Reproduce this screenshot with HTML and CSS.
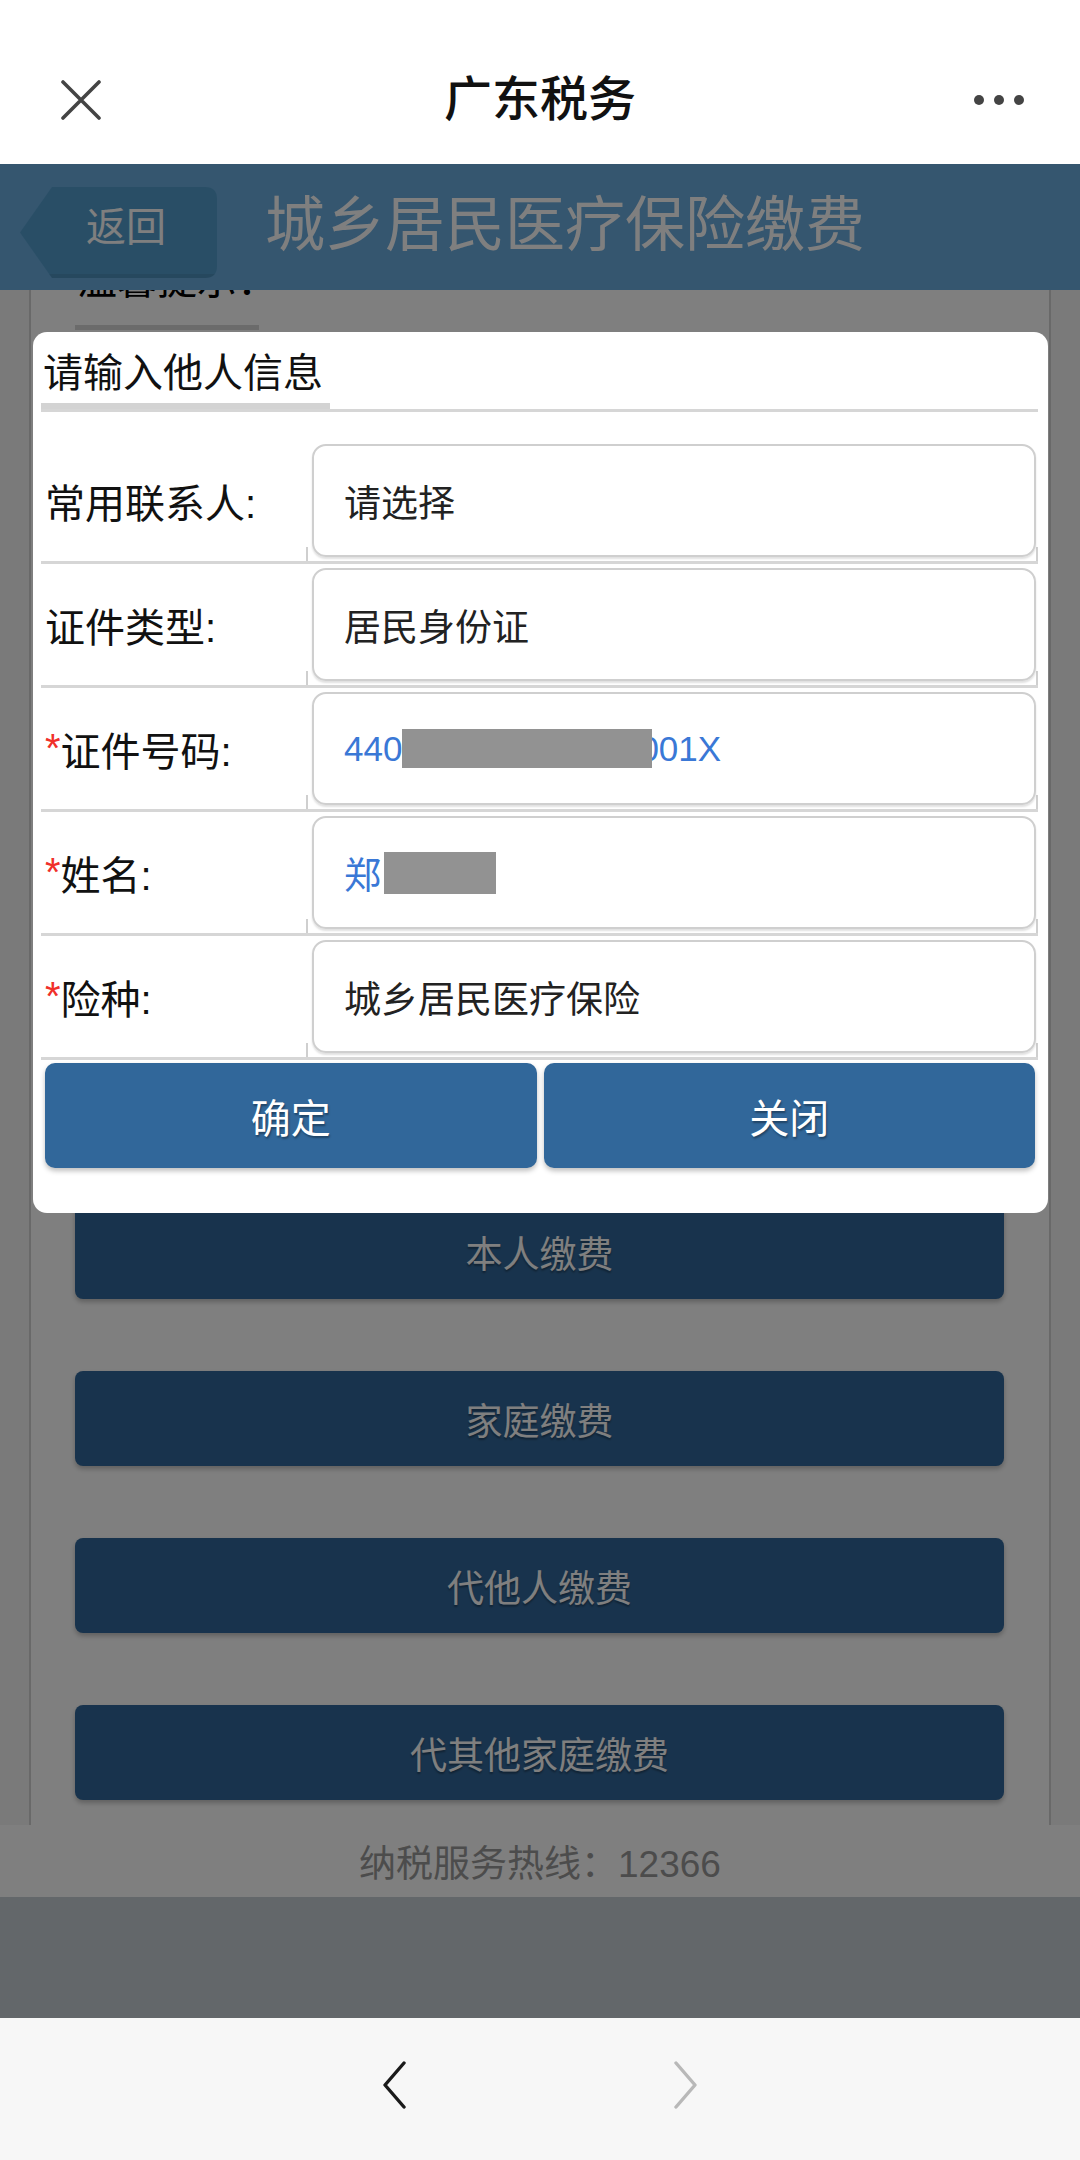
FILE: index.html
```html
<!DOCTYPE html>
<html lang="zh-CN">
<head>
<meta charset="utf-8">
<title>广东税务</title>
<link rel="stylesheet" href="styles.css">
</head>
<body>
<div class="screen">
  <div class="wx-nav">
    <div class="wx-left">
      <svg class="wx-close" width="40" height="40" viewBox="0 0 40 40"><path d="M2 2 L38 38 M38 2 L2 38" stroke="#444" stroke-width="3.6" stroke-linecap="round" fill="none"/></svg>
    </div>
    <div class="wx-title">广东税务</div>
    <div class="wx-right">
      <svg width="50" height="10" viewBox="0 0 50 10"><circle cx="5" cy="5" r="5" fill="#444"/><circle cx="25" cy="5" r="5" fill="#444"/><circle cx="45" cy="5" r="5" fill="#444"/></svg>
    </div>
  </div>

  <div class="webview">
    <div class="page-header">
      <div class="back-btn">返回</div>
      <div class="page-title">城乡居民医疗保险缴费</div>
    </div>
    <div class="main">
      <div class="card">
        <div class="tip-title">温馨提示：</div>
        <div class="tab-line"></div>
        <div class="pay-list">
          <div class="pay-btn">本人缴费</div>
          <div class="pay-btn">家庭缴费</div>
          <div class="pay-btn">代他人缴费</div>
          <div class="pay-btn">代其他家庭缴费</div>
        </div>
      </div>
    </div>
    <div class="footer">纳税服务热线：12366</div>
    <div class="footer-gap"></div>

    <div class="mask"></div>
    <div class="dialog">
      <div class="dlg-head"><span class="dlg-title">请输入他人信息</span></div>
      <div class="row">
        <div class="label">常用联系人:</div>
        <div class="field"><div class="box">请选择</div></div>
      </div>
      <div class="row">
        <div class="label">证件类型:</div>
        <div class="field"><div class="box">居民身份证</div></div>
      </div>
      <div class="row">
        <div class="label"><span class="req">*</span>证件号码:</div>
        <div class="field"><div class="box blue"><span class="digits">440</span><span class="redact id-redact"></span><span class="digits">001X</span></div></div>
      </div>
      <div class="row">
        <div class="label"><span class="req">*</span>姓名:</div>
        <div class="field"><div class="box blue"><span>郑</span><span class="redact name-redact"></span></div></div>
      </div>
      <div class="row">
        <div class="label"><span class="req">*</span>险种:</div>
        <div class="field"><div class="box">城乡居民医疗保险</div></div>
      </div>
      <div class="dlg-btns">
        <div class="dlg-btn">确定</div>
        <div class="dlg-btn">关闭</div>
      </div>
    </div>
  </div>

  <div class="wx-bottom">
    <svg width="24" height="48" viewBox="0 0 24 48"><path d="M22 2 L3 24 L22 46" stroke="#1a1a1a" stroke-width="3.4" fill="none" stroke-linecap="round" stroke-linejoin="round"/></svg>
    <svg width="24" height="48" viewBox="0 0 24 48"><path d="M2 2 L21 24 L2 46" stroke="#b8b8b8" stroke-width="3.4" fill="none" stroke-linecap="round" stroke-linejoin="round"/></svg>
  </div>
</div>
</body>
</html>
```

FILE: styles.css
```css
* { box-sizing: border-box; }
html, body { margin: 0; padding: 0; }
body {
  width: 1080px;
  height: 2160px;
  overflow: hidden;
  font-family: "Liberation Sans", "Noto Sans CJK SC", sans-serif;
  background: #fff;
}
.screen { width: 1080px; height: 2160px; display: flex; flex-direction: column; }

/* WeChat top bar */
.wx-nav {
  height: 164px;
  padding-top: 36px;
  display: grid;
  grid-template-columns: 1fr auto 1fr;
  align-items: center;
  background: #fff;
}
.wx-left { padding-left: 61px; display: flex; align-items: center; }
.wx-close { display: block; }
.wx-title { font-size: 48px; font-weight: 500; color: #111; line-height: 60px; }
.wx-right { display: flex; justify-content: flex-end; padding-right: 56px; }
.wx-right svg { display: block; }

/* web view */
.webview { position: relative; height: 1854px; overflow: hidden; display: flex; flex-direction: column; }

.page-header {
  height: 126px;
  flex: none;
  background: #6aacde;
  display: flex;
  align-items: flex-start;
  position: relative;
  z-index: 1;
}
.back-btn {
  margin: 23px 0 0 20px;
  width: 197px;
  height: 91px;
  background: #539dcd;
  clip-path: path('M32 0 H185 Q197 0 197 12 V79 Q197 91 185 91 H32 L0 45.5 Z');
  box-shadow: inset 0 -4px 0 rgba(0,0,0,0.08);
  color: #fff;
  font-size: 40px;
  line-height: 40px;
  padding: 20px 0 0 66px;
}
.page-title {
  margin: 32px 0 0 48px;
  font-size: 60px;
  line-height: 60px;
  color: #fff;
  white-space: nowrap;
}

.main {
  height: 1535px;
  flex: none;
  background: #f4f4f4;
  padding: 0 29px;
  display: flex;
}
.card {
  flex: 1;
  background: #fff;
  border-left: 2px solid #d2d2d2;
  border-right: 2px solid #d2d2d2;
  padding: 0 45px 0 44px;
}
.tip-title {
  margin-top: -30px;
  padding-left: 2px;
  font-size: 40px;
  line-height: 40px;
  color: #000;
}
.tab-line { width: 184px; height: 5px; background: #d6d6d6; margin-top: 25px; }
.pay-list { margin-top: 874px; display: flex; flex-direction: column; gap: 72px; }
.pay-btn {
  height: 95px;
  background: #31679a;
  border-radius: 8px;
  box-shadow: 0 3px 5px rgba(0,0,0,0.25);
  color: #fff;
  font-size: 37px;
  display: flex;
  align-items: center;
  justify-content: center;
  text-shadow: 0 2px 2px rgba(0,0,0,0.35);
}

.footer {
  height: 72px;
  flex: none;
  background: #fff;
  color: #999;
  font-size: 37px;
  display: flex;
  align-items: center;
  justify-content: center;
}
.footer-gap { height: 121px; flex: none; background: #c6ced4; }

.mask { position: absolute; inset: 0; background: rgba(0,0,0,0.5); z-index: 2; }

.dialog {
  position: absolute;
  z-index: 3;
  top: 168px;
  left: 33px;
  width: 1015px;
  background: #fff;
  border-radius: 14px;
  padding: 21px 10px 45px 8px;
}
.dlg-head { border-bottom: 3px solid #d6d6d6; margin-bottom: 28px; display: flex; }
.dlg-title {
  display: block;
  font-size: 40px;
  line-height: 40px;
  color: #111;
  padding: 0 7px 10px 2px;
  border-bottom: 6px solid #d3d3d3;
}
.row { display: flex; border-bottom: 3px solid #d6d6d6; }
.label {
  width: 265px;
  flex: none;
  padding-left: 4px;
  display: flex;
  align-items: center;
  font-size: 40px;
  color: #111;
}
.req { color: #f0302a; }
.field {
  flex: 1;
  padding: 4px 2px 4px 6px;
  background:
    linear-gradient(#cfcfcf, #cfcfcf) 0 100% / 2px 14px no-repeat,
    linear-gradient(#cfcfcf, #cfcfcf) 100% 100% / 2px 14px no-repeat;
}
.box {
  height: 113px;
  border: 2px solid #cfcfcf;
  border-radius: 14px;
  box-shadow: 0 2px 2px rgba(0,0,0,0.12);
  padding-left: 30px;
  display: flex;
  align-items: center;
  font-size: 37px;
  color: #222;
}
.box.blue { color: #3a78d6; }
.digits { font-size: 35px; }
.redact { display: block; background: #929292; flex: none; }
.id-redact { width: 250px; height: 39px; margin-right: -13px; z-index: 1; }
.name-redact { width: 112px; height: 42px; margin-left: 3px; }

.dlg-btns { display: flex; gap: 7px; margin: 3px 3px 0 4px; }
.dlg-btn {
  flex: 1;
  height: 105px;
  background: #31679a;
  border-radius: 10px;
  box-shadow: 0 3px 5px rgba(0,0,0,0.25);
  color: #fff;
  font-size: 40px;
  display: flex;
  align-items: center;
  justify-content: center;
  text-shadow: 1px 2px 2px rgba(0,0,0,0.35);
}

/* WeChat bottom bar */
.wx-bottom {
  height: 142px;
  flex: none;
  background: #f7f7f7;
  display: flex;
  align-items: center;
  justify-content: center;
  gap: 268px;
  padding-bottom: 8px;
}
.wx-bottom svg { display: block; }
```
